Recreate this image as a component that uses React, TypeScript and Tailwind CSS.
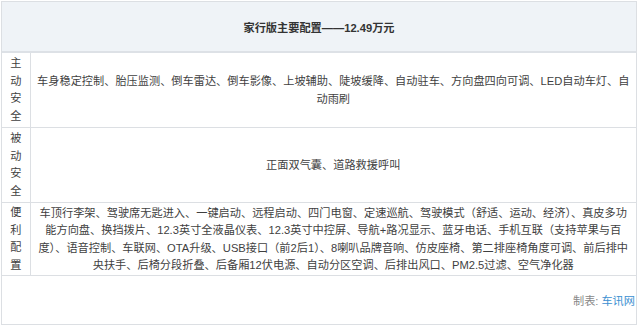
const rows = [
  {
    label: "主动安全",
    height: "h-[75px]",
    lines: [
      "车身稳定控制、胎压监测、倒车雷达、倒车影像、上坡辅助、陡坡缓降、自动驻车、方向盘四向可调、LED自动车灯、自",
      "动雨刷",
    ],
  },
  {
    label: "被动安全",
    height: "h-[75px]",
    lines: ["正面双气囊、道路救援呼叫"],
  },
  {
    label: "便利配置",
    height: "h-[71px]",
    lines: [
      "车顶行李架、驾驶席无匙进入、一键启动、远程启动、四门电窗、定速巡航、驾驶模式（舒适、运动、经济）、真皮多功",
      "能方向盘、换挡拨片、12.3英寸全液晶仪表、12.3英寸中控屏、导航+路况显示、蓝牙电话、手机互联（支持苹果与百",
      "度）、语音控制、车联网、OTA升级、USB接口（前2后1）、8喇叭品牌音响、仿皮座椅、第二排座椅角度可调、前后排中",
      "央扶手、后椅分段折叠、后备厢12伏电源、自动分区空调、后排出风口、PM2.5过滤、空气净化器",
    ],
  },
];

export default function App() {
  return (
    <div
      className="w-[640px] h-[326px] bg-white pl-[1px] pt-[1px] text-[11.2px] leading-[17.5px] text-[#3f3f3f]"
      style={{ fontFamily: '"Liberation Sans", "Noto Sans CJK SC", sans-serif' }}
    >
      <div className="w-[636px] h-[324px] border border-[#dcdfe3] flex flex-col">
        <table className="w-full border-collapse table-fixed">
          <colgroup>
            <col className="w-[28px]" />
            <col />
          </colgroup>
          <thead>
            <tr>
              <th
                colSpan={2}
                className="h-[50px] bg-[#eff3f7] border-b-2 border-[#dde1e6] text-center align-middle font-bold text-[#333] pt-[4px]"
              >
                家行版主要配置——12.49万元
              </th>
            </tr>
          </thead>
          <tbody>
            {rows.map((row) => (
              <tr key={row.label} className="border-b border-[#dcdfe3]">
                <td
                  className={`${row.height} border-r border-[#dcdfe3] px-[8px] pt-[1px] text-center align-middle break-all`}
                >
                  {row.label}
                </td>
                <td className="px-[6px] pt-[2px] text-center align-middle whitespace-nowrap">
                  {row.lines.map((line, i) => (
                    <div key={i}>{line}</div>
                  ))}
                </td>
              </tr>
            ))}
          </tbody>
        </table>
        <div className="flex-1 flex items-center justify-end pr-[1px] pt-[3px]">
          <span className="text-[#888]">制表: </span>
          <span className="text-[#3b8fd1] ml-[3px]">车讯网</span>
        </div>
      </div>
    </div>
  );
}
